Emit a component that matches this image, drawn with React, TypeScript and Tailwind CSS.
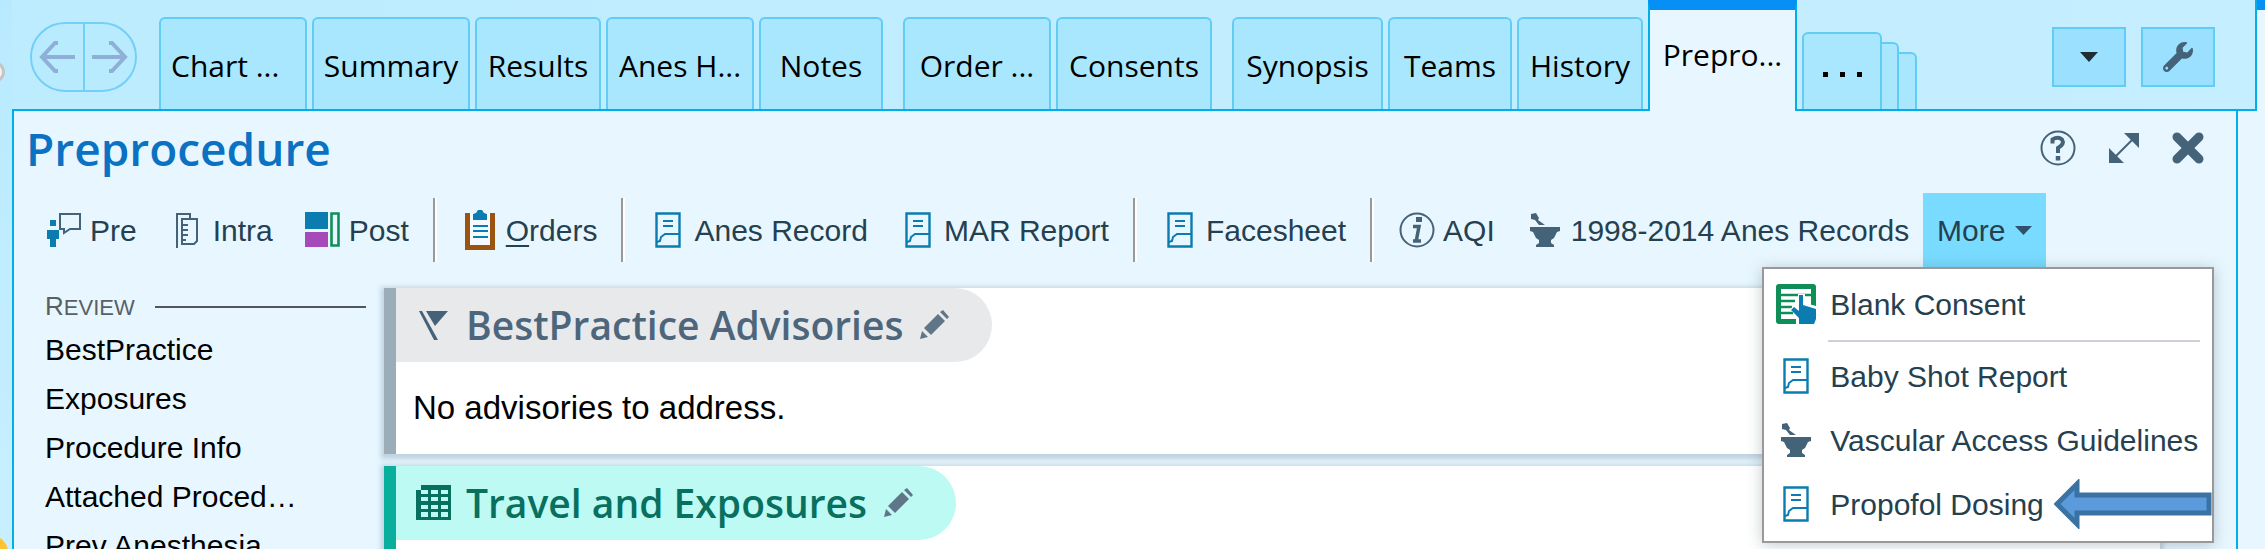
import React from 'react';
import { FaWrench } from 'react-icons/fa';

type Tab = { label: string; className: string };
type Action = { label: string; icon: React.ReactNode; accessKey?: boolean };

const tabGroups: Tab[][] = [
  [
    { label: 'Chart ...', className: 'w-[148px] justify-start pl-2.5' },
    { label: 'Summary', className: 'w-[158px] justify-center' },
    { label: 'Results', className: 'w-[126px] justify-center' },
    { label: 'Anes H...', className: 'w-[148px] justify-center' },
    { label: 'Notes', className: 'w-[124px] justify-center' },
  ],
  [
    { label: 'Order ...', className: 'w-[148px] justify-center' },
    { label: 'Consents', className: 'w-[156px] justify-center' },
  ],
  [
    { label: 'Synopsis', className: 'w-[151px] justify-center' },
    { label: 'Teams', className: 'w-[124px] justify-center' },
    { label: 'History', className: 'w-[126px] justify-center' },
  ],
];

const sections = ['BestPractice', 'Exposures', 'Procedure Info', 'Attached Proced…', 'Prev Anesthesia'];

function ReportIcon() {
  return (
    <svg width="26" height="36" viewBox="0 0 26 36" fill="none" stroke="#0b7cb0" strokeWidth="2">
      <path d="M1.5 1.5h23v33h-23z" strokeWidth="2.4" />
      <path d="M8 9h10M8 14h10" strokeWidth="2.2" />
      <path d="M2 30l3-1 1-4 4-3h14" />
    </svg>
  );
}

function MortarIcon() {
  return (
    <svg width="32" height="36" viewBox="0 0 32 36" fill="#456378">
      <path d="M2 2l5-1 3 5-1 2 7 5h-6L6 8 2 7z" />
      <path d="M1 15h30v4l-3 1-3 6-3 2v3l3 2v2H7v-2l3-2v-3l-3-2-3-6-3-1z" />
    </svg>
  );
}

function PreIcon() {
  return (
    <svg width="36" height="36" viewBox="0 0 36 36">
      <path d="M4 8h6v6H4zM1 18h12v9h-3v8H4v-8H1z" fill="#0b7cb0" />
      <path d="M14 2h20v15H24l-6 4v-4h-4z" fill="none" stroke="#456378" strokeWidth="2" />
    </svg>
  );
}

function IntraIcon() {
  return (
    <svg width="24" height="36" viewBox="0 0 24 36" fill="none" stroke="#456378" strokeWidth="2">
      <path d="M2 36V2h13v5" />
      <path d="M7 7h15v22l-3 3H7z" />
      <path d="M8 13h5M8 18h5M8 23h5M8 28h3" />
    </svg>
  );
}

function PostIcon() {
  return (
    <svg width="36" height="36" viewBox="0 0 36 36">
      <path d="M0 0h23v17H0z" fill="#0b7cb0" />
      <path d="M0 20h23v15H0z" fill="#a54ab8" />
      <path d="M26.5 1.5h7v32h-7z" fill="none" stroke="#0f8f57" strokeWidth="2.6" />
    </svg>
  );
}

function ClipboardIcon() {
  return (
    <svg width="30" height="40" viewBox="0 0 30 40">
      <path d="M0 3h30v37H0z" fill="#9a5410" />
      <path d="M5 3h20v32H5z" fill="#f4faff" />
      <path d="M8 10V4l3-1 2-3h4l2 3 3 1v6z" fill="#0b7cb0" />
      <path d="M8 16h15M8 21h15M8 27h15" stroke="#0b7cb0" strokeWidth="2.2" />
    </svg>
  );
}

function InfoIcon() {
  return (
    <svg width="36" height="36" viewBox="0 0 36 36" fill="none" stroke="#456378">
      <circle cx="18" cy="18" r="16.5" strokeWidth="2" />
      <path d="M17 7.5h6" strokeWidth="5" />
      <path d="M14 14.5h6l-2.500 13M14 29h8" strokeWidth="3.500" />
    </svg>
  );
}

function ConsentIcon() {
  return (
    <svg width="40" height="40" viewBox="0 0 40 40">
      <rect width="40" height="40" rx="3" fill="#0f8f57" />
      <path d="M5 5h30v19L24 35H5z" fill="#fff" />
      <path d="M5 11h30M5 17h14M5 23h11M5 29h12" stroke="#0f8f57" strokeWidth="2.600" />
      <path d="M20 40V32l-6-7 4-3 4 3V10h7v9l11 3v18z" fill="#fff" />
      <path d="M23 40v-6l-8-8 3-3 5 4V11h4v10l13 4v10l-2 5z" fill="#0b7cb0" />
    </svg>
  );
}

function PencilIcon() {
  return (
    <svg width="30" height="30" viewBox="0 0 30 30" fill="#5f7688">
      <path d="M0 29l2-8 6 6z" />
      <path d="M4 18L18 4l7 7-14 14z" />
      <path d="M20 2l3-2 6 7-2 2z" />
    </svg>
  );
}

function FlagIcon() {
  return (
    <svg width="36" height="36" viewBox="0 0 36 36" fill="#456378">
      <path d="M3 4h3l16 29h-4z" />
      <path d="M10 4h22L19 19z" />
    </svg>
  );
}

function GridIcon() {
  return (
    <svg width="36" height="36" viewBox="0 0 36 36">
      <path d="M5 0h30v35H0V5h5z" fill="#08705f" />
      <path
        d="M5 5h7v4H5zM15 5h7v4h-7zM25 5h7v4h-7zM5 12h7v4H5zM15 12h7v4h-7zM25 12h7v4h-7zM5 20h7v4H5zM15 20h7v4h-7zM25 20h7v4h-7zM5 27h7v5H5zM15 27h7v5h-7zM25 27h7v5h-7z"
        fill="#bdfaf4"
      />
    </svg>
  );
}

const toolbar: Action[][] = [
  [
    { label: 'Pre', icon: <PreIcon /> },
    { label: 'Intra', icon: <IntraIcon /> },
    { label: 'Post', icon: <PostIcon /> },
  ],
  [{ label: 'Orders', icon: <ClipboardIcon />, accessKey: true }],
  [
    { label: 'Anes Record', icon: <ReportIcon /> },
    { label: 'MAR Report', icon: <ReportIcon /> },
  ],
  [{ label: 'Facesheet', icon: <ReportIcon /> }],
  [
    { label: 'AQI', icon: <InfoIcon /> },
    { label: '1998-2014 Anes Records', icon: <MortarIcon /> },
  ],
];

function ToolbarButton({ label, icon, accessKey }: Action) {
  return (
    <button className="flex h-full items-center gap-1.5 px-3.5 whitespace-nowrap">
      <span className="flex w-10 justify-center">{icon}</span>
      <span>
        {accessKey ? (
          <>
            <span className="underline decoration-2 underline-offset-4">{label[0]}</span>
            {label.slice(1)}
          </>
        ) : (
          label
        )}
      </span>
    </button>
  );
}

function MenuItem({ label, icon, children }: Action & { children?: React.ReactNode }) {
  return (
    <button role="menuitem" className="flex h-16 w-full items-center gap-3.5 whitespace-nowrap">
      <span className="flex w-10 justify-center">{icon}</span>
      <span>{label}</span>
      {children}
    </button>
  );
}

function MoreMenu() {
  return (
    <div
      role="menu"
      className="absolute top-full -right-[168px] z-10 w-[452px] border-2 border-[#999] bg-white pl-3 shadow-[0_2px_14px_rgba(60,80,100,0.3)]"
    >
      <div className="pt-[3px] pb-1">
        <MenuItem label="Blank Consent" icon={<ConsentIcon />} />
      </div>
      <hr className="mr-3 ml-13 border-t-2 border-[#ccd0d8]" />
      <div className="pt-0.5 pb-[5px]">
        <MenuItem label="Baby Shot Report" icon={<ReportIcon />} />
        <MenuItem label="Vascular Access Guidelines" icon={<MortarIcon />} />
        <MenuItem label="Propofol Dosing" icon={<ReportIcon />}>
          <svg width="158" height="50" viewBox="0 0 158 50" className="-ml-1">
            <path d="M3 25L23 5v11h132v18H23v11z" fill="#5b9bdc" stroke="#3a73a3" strokeWidth="5" />
          </svg>
        </MenuItem>
      </div>
    </div>
  );
}

function TabBar() {
  return (
    <header className="flex h-[111px] flex-1 items-end border-r-2 border-b-2 border-[#00aeea]">
      <div className="mt-[22px] ml-[18px] flex h-[70px] w-[107px] shrink-0 self-start overflow-hidden rounded-full border-2 border-[#74cff8] bg-[#b9ebff]">
        <button aria-label="Back" className="flex flex-1 items-center justify-center border-r-2 border-[#74cff8]">
          <svg width="36" height="32" viewBox="0 0 36 32" fill="none" stroke="#8fafd8" strokeWidth="4">
            <path d="M36 16H4M19 2h-3L3 16l13 14h3" />
          </svg>
        </button>
        <button aria-label="Forward" className="flex flex-1 items-center justify-center">
          <svg width="36" height="32" viewBox="0 0 36 32" fill="none" stroke="#8fafd8" strokeWidth="4">
            <path d="M0 16h32M17 2h3l13 14-13 14h-3" />
          </svg>
        </button>
      </div>
      <nav className="ml-[22px] flex items-end gap-5 font-['Open_Sans',sans-serif] text-[30px] text-black">
        {tabGroups.map((group, i) => (
          <div key={i} className="flex gap-[5px]">
            {group.map((tab) => (
              <button
                key={tab.label}
                className={`flex h-[92px] items-center rounded-t-md border-2 border-b-0 border-[#62cdf4] bg-[#a9e7ff] pt-0.5 whitespace-nowrap ${tab.className}`}
              >
                {tab.label}
              </button>
            ))}
          </div>
        ))}
      </nav>
      <button className="-mb-0.5 ml-[5px] flex h-[111px] w-[149px] shrink-0 items-center justify-center border-x-2 border-t-10 border-x-[#00aeea] border-t-[#068ff5] bg-[#e8f7ff] pb-3 font-['Open_Sans',sans-serif] text-[30px] text-black">
        Prepro...
      </button>
      <div className="ml-[5px] flex items-end">
        <button aria-label="More tabs" className="flex h-[77px] w-20 items-center justify-center gap-3 rounded-t-md border-2 border-b-0 border-[#62cdf4] bg-[#a9e7ff] pt-1.5">
          <span className="size-[5px] bg-black" />
          <span className="size-[5px] bg-black" />
          <span className="size-[5px] bg-black" />
        </button>
        <span className="h-[67px] w-[17px] rounded-tr-md border-t-2 border-r-2 border-[#62cdf4] bg-[#a9e7ff]" />
        <span className="h-[57px] w-[18px] rounded-tr-md border-t-2 border-r-2 border-[#62cdf4] bg-[#a9e7ff]" />
      </div>
      <div className="mr-10 mb-[22px] ml-auto flex gap-[15px]">
        <button aria-label="Show list" className="flex h-[60px] w-[74px] items-center justify-center border-2 border-[#62cdf4] bg-[#9be1ff]">
          <svg width="18" height="10" viewBox="0 0 18 10" fill="#1f2d33">
            <path d="M0 0h18L9 10z" />
          </svg>
        </button>
        <button aria-label="Settings" className="flex h-[60px] w-[74px] items-center justify-center border-2 border-[#62cdf4] bg-[#9be1ff]">
          <FaWrench className="size-[30px] text-[#456378]" />
        </button>
      </div>
    </header>
  );
}

function TitleRow() {
  return (
    <div className="mb-2 flex h-[74px] items-center justify-between pr-8 pl-3">
      <h1 className="font-['Open_Sans',sans-serif] text-[46px] leading-none font-semibold text-[#0b71c3]">Preprocedure</h1>
      <div className="flex items-center gap-8 text-[#456378]">
        <button aria-label="Help">
          <svg width="36" height="36" viewBox="0 0 36 36" fill="none" stroke="currentColor">
            <circle cx="18" cy="18" r="16.5" strokeWidth="2" />
            <path d="M12.500 13.500V9.500Q18 6 22 9.500Q25 14 18 18v5" strokeWidth="4" />
            <path d="M18 26v4.500" strokeWidth="4.500" />
          </svg>
        </button>
        <button aria-label="Expand">
          <svg width="32" height="32" viewBox="0 0 32 32" fill="currentColor">
            <path d="M16 1h15v15zM1 16v15h15z" />
            <path d="M8 24L24 8" stroke="currentColor" strokeWidth="2" />
          </svg>
        </button>
        <button aria-label="Close">
          <svg width="32" height="32" viewBox="0 0 32 32" fill="none" stroke="currentColor" strokeWidth="9">
            <path d="M5 5l22 22M27 5L5 27" strokeLinecap="round" />
          </svg>
        </button>
      </div>
    </div>
  );
}

function Toolbar() {
  return (
    <div role="toolbar" className="flex h-[74px] items-center pl-4 text-[30px] text-[#25404f]">
      {toolbar.map((group, i) => (
        <React.Fragment key={i}>
          {i > 0 && <span className="mr-[9px] ml-2.5 h-16 w-1 border-r-2 border-l-2 border-r-white border-l-[#999]" />}
          <div className="flex h-full gap-0.5">
            {group.map((action) => (
              <ToolbarButton key={action.label} {...action} />
            ))}
          </div>
        </React.Fragment>
      ))}
      <div className="relative h-full">
        <button aria-haspopup="menu" aria-expanded="true" className="flex h-full w-[123px] items-center justify-center gap-2.5 bg-[#79dbff]">
          More
          <svg width="17" height="9" viewBox="0 0 17 9" fill="#31506a">
            <path d="M0 0h17L8.500 9z" />
          </svg>
        </button>
        <MoreMenu />
      </div>
    </div>
  );
}

function Sidebar() {
  return (
    <nav className="w-[370px] shrink-0 pl-[31px] text-[30px] text-black">
      <h2 className="flex h-[37px] items-center gap-5 pr-[18px] text-[22px] text-[#5a5f66]">
        <span>
          <span className="text-[26px]">R</span>EVIEW
        </span>
        <span className="h-0.5 flex-1 bg-[#50565c]" />
      </h2>
      <ul>
        {sections.map((name) => (
          <li key={name} className="flex h-[49px] items-center whitespace-nowrap">
            <a href="#">{name}</a>
          </li>
        ))}
      </ul>
    </nav>
  );
}

function App() {
  return (
    <div className="flex h-screen overflow-hidden bg-linear-to-b from-[#b8eaff] to-[#c8efff] font-['Liberation_Sans',Arial,sans-serif]">
      <div className="relative w-3 shrink-0 overflow-hidden">
        <span className="absolute top-[61px] -left-[17px] size-[22px] rounded-full border-3 border-[#c4c4c4] bg-[#f3f3f3]" />
        <span className="absolute top-[536px] -left-6 size-8 rounded-full bg-[#ffc233]" />
      </div>
      <div className="flex min-w-0 flex-1 flex-col">
        <div className="flex shrink-0 bg-linear-to-r from-[#bdecff] to-[#c5eeff]">
          <TabBar />
          <div className="w-2 border-t-10 border-[#068ff5] bg-[#e8f7ff]" />
          <div className="w-0.5 bg-white" />
        </div>
        <div className="flex flex-1 bg-[#e8f7ff]">
          <main className="min-w-0 flex-1 border-x-2 border-[#00aeea]">
            <TitleRow />
            <Toolbar />
            <div className="flex pt-[21px] pr-[76px]">
              <Sidebar />
              <div className="flex flex-1 flex-col gap-3">
                <section className="border-l-12 border-[#9badb9] bg-white shadow-[0_2px_5px_3px_rgba(70,100,130,0.25)]">
                  <div className="flex h-[74px] w-[596px] items-center rounded-r-full bg-[#e8e9eb] pl-5 text-[#4d667c]">
                    <FlagIcon />
                    <h2 className="ml-3.5 font-['Open_Sans',sans-serif] text-[39px] font-semibold whitespace-nowrap">BestPractice Advisories</h2>
                    <button aria-label="Edit BestPractice Advisories" className="ml-auto pr-[42px]">
                      <PencilIcon />
                    </button>
                  </div>
                  <p className="flex h-[92px] items-center pl-[17px] text-[33px] text-black">No advisories to address.</p>
                </section>
                <section className="h-[166px] border-l-12 border-[#0aae9c] bg-white shadow-[0_2px_5px_3px_rgba(70,100,130,0.25)]">
                  <div className="flex h-[74px] w-[560px] items-center rounded-r-full bg-[#bdfaf4] pl-5 text-[#08705f]">
                    <GridIcon />
                    <h2 className="ml-3.5 font-['Open_Sans',sans-serif] text-[39px] font-semibold whitespace-nowrap">Travel and Exposures</h2>
                    <button aria-label="Edit Travel and Exposures" className="ml-auto pr-[42px]">
                      <PencilIcon />
                    </button>
                  </div>
                </section>
              </div>
            </div>
          </main>
          <div className="w-[27px]" />
          <div className="w-0.5 bg-white" />
        </div>
      </div>
    </div>
  );
}

export default App;
